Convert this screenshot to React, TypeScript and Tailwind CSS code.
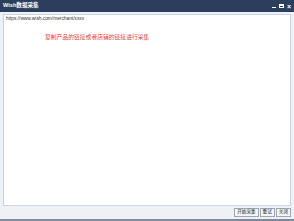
import React from 'react';

const font = { fontFamily: '"Liberation Sans", "Noto Sans CJK SC", sans-serif' };

export default function App() {
  return (
    <div className="w-[294px] h-[221px] flex flex-col bg-[#eef1f5] border-b-2 border-[#7d8ba0] overflow-hidden" style={font}>
      {/* Title bar */}
      <div className="h-[12px] bg-[#2d3e5c] flex items-center justify-between px-[3px] shrink-0">
        <span className="text-white text-[5.6px] font-bold leading-none">Wish数据采集</span>
        <div className="flex items-center gap-[3px] text-white leading-none">
          <span className="w-[4px] h-[1px] bg-white mt-[3px]" />
          <span className="w-[5px] h-[4px] border border-white border-t-2" />
          <span className="text-[7px] font-bold">×</span>
        </div>
      </div>

      {/* Body */}
      <div className="flex-1 flex flex-col px-[3px] pt-[2px] pb-[2px] gap-[2px]">
        <div className="flex-1 bg-white border border-[#c9d3df] px-[2px] pt-[2px]">
          <div className="text-[4.8px] text-[#333] leading-none">https://www.wish.com/merchant/xxxx</div>
          <div className="text-[5.8px] text-[#e8413a] leading-none mt-[13px] pl-[39px]">
            复制产品的链接或者店铺的链接进行采集
          </div>
        </div>
        <div className="flex justify-end gap-[1px] h-[9px]">
          <button className="px-[2px] border border-[#9aa6b4] bg-[#f4f5f7] text-[4.6px] leading-none text-[#222]">开始采集</button>
          <button className="px-[2px] border border-[#9aa6b4] bg-[#f4f5f7] text-[4.6px] leading-none text-[#222]">重试</button>
          <button className="px-[2px] border border-[#9aa6b4] bg-[#f4f5f7] text-[4.6px] leading-none text-[#222]">关闭</button>
        </div>
      </div>
    </div>
  );
}
